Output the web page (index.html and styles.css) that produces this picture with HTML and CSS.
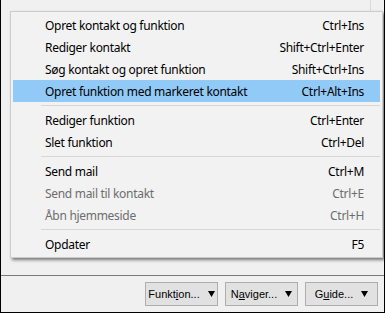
FILE: index.html
```html
<!DOCTYPE html>
<html>
<head>
<meta charset="utf-8">
<link rel="stylesheet" href="styles.css">
</head>
<body>
<div class="window">
  <div class="panel">
    <div class="header"><div class="col"></div></div>
  </div>
  <div class="toolbar">
    <button class="btn"><span>Funkt<u>i</u>on...</span><svg width="7" height="6" viewBox="0 0 7 6"><polygon points="0,0 7,0 3.5,6" fill="#000"/></svg></button>
    <button class="btn"><span>N<u>a</u>viger...</span><svg width="7" height="6" viewBox="0 0 7 6"><polygon points="0,0 7,0 3.5,6" fill="#000"/></svg></button>
    <button class="btn"><span>G<u>u</u>ide...</span><svg width="7" height="6" viewBox="0 0 7 6"><polygon points="0,0 7,0 3.5,6" fill="#000"/></svg></button>
  </div>
  <div class="menu">
    <div class="item"><span>Opret kontakt og funktion</span><span>Ctrl+Ins</span></div>
    <div class="item"><span>Rediger kontakt</span><span>Shift+Ctrl+Enter</span></div>
    <div class="item"><span>Søg kontakt og opret funktion</span><span>Shift+Ctrl+Ins</span></div>
    <div class="item active"><span>Opret funktion med markeret kontakt</span><span>Ctrl+Alt+Ins</span></div>
    <div class="sep"></div>
    <div class="item"><span>Rediger funktion</span><span>Ctrl+Enter</span></div>
    <div class="item"><span>Slet funktion</span><span>Ctrl+Del</span></div>
    <div class="sep"></div>
    <div class="item"><span>Send mail</span><span>Ctrl+M</span></div>
    <div class="item disabled"><span>Send mail til kontakt</span><span>Ctrl+E</span></div>
    <div class="item disabled"><span>Åbn hjemmeside</span><span>Ctrl+H</span></div>
    <div class="sep"></div>
    <div class="item"><span>Opdater</span><span>F5</span></div>
  </div>
</div>
</body>
</html>
```
FILE: styles.css
```css
* { box-sizing: border-box; }
html, body { margin: 0; padding: 0; background: #f0f0f0; }
.window {
  position: relative;
  width: 385px;
  height: 313px;
  background: #f0f0f0;
  border-left: 1px solid #000;
  border-right: 1px solid #000;
  border-bottom: 1px solid #000;
  display: flex;
  flex-direction: column;
  overflow: hidden;
}
.panel {
  height: 276px;
  border-bottom: 1px solid #7a7a7a;
}
.header { height: 11px; display: flex; }
.header .col { width: 370px; border-right: 1px solid #d9d9d9; }
.toolbar {
  flex: 1;
  display: flex;
  justify-content: flex-end;
  align-items: flex-start;
  gap: 7px;
  padding: 6px 6px 0 0;
}
.btn {
  width: 73px;
  height: 24px;
  margin: 0;
  padding: 0 2px;
  border: 1px solid #adadad;
  background: #e1e1e1;
  font-family: "Liberation Sans", Arial, sans-serif;
  font-size: 11px;
  color: #000;
  display: flex;
  align-items: center;
  justify-content: center;
  gap: 8px;
  white-space: nowrap;
  overflow: hidden;
}
.btn svg { flex: none; }
.menu {
  position: absolute;
  left: 9px;
  top: 11px;
  width: 373px;
  background: #f2f2f2;
  border: 1px solid #cccccc;
  padding: 2px;
  box-shadow: 2px 2px 3px rgba(0,0,0,0.5);
  font-family: "Segoe UI", "Noto Sans", sans-serif;
  font-size: 12px;
  letter-spacing: -0.3px;
  color: #000;
}
.item {
  height: 22px;
  display: flex;
  align-items: center;
  justify-content: space-between;
  padding: 0 16px 0 32px;
  white-space: nowrap;
}
.item.active { background: #91c9f7; }
.item.disabled { color: #6d6d6d; }
.sep {
  height: 7px;
  padding-top: 3px;
  margin-left: 28px;
}
.sep::after {
  content: "";
  display: block;
  height: 1px;
  background: #d7d7d7;
}
```
